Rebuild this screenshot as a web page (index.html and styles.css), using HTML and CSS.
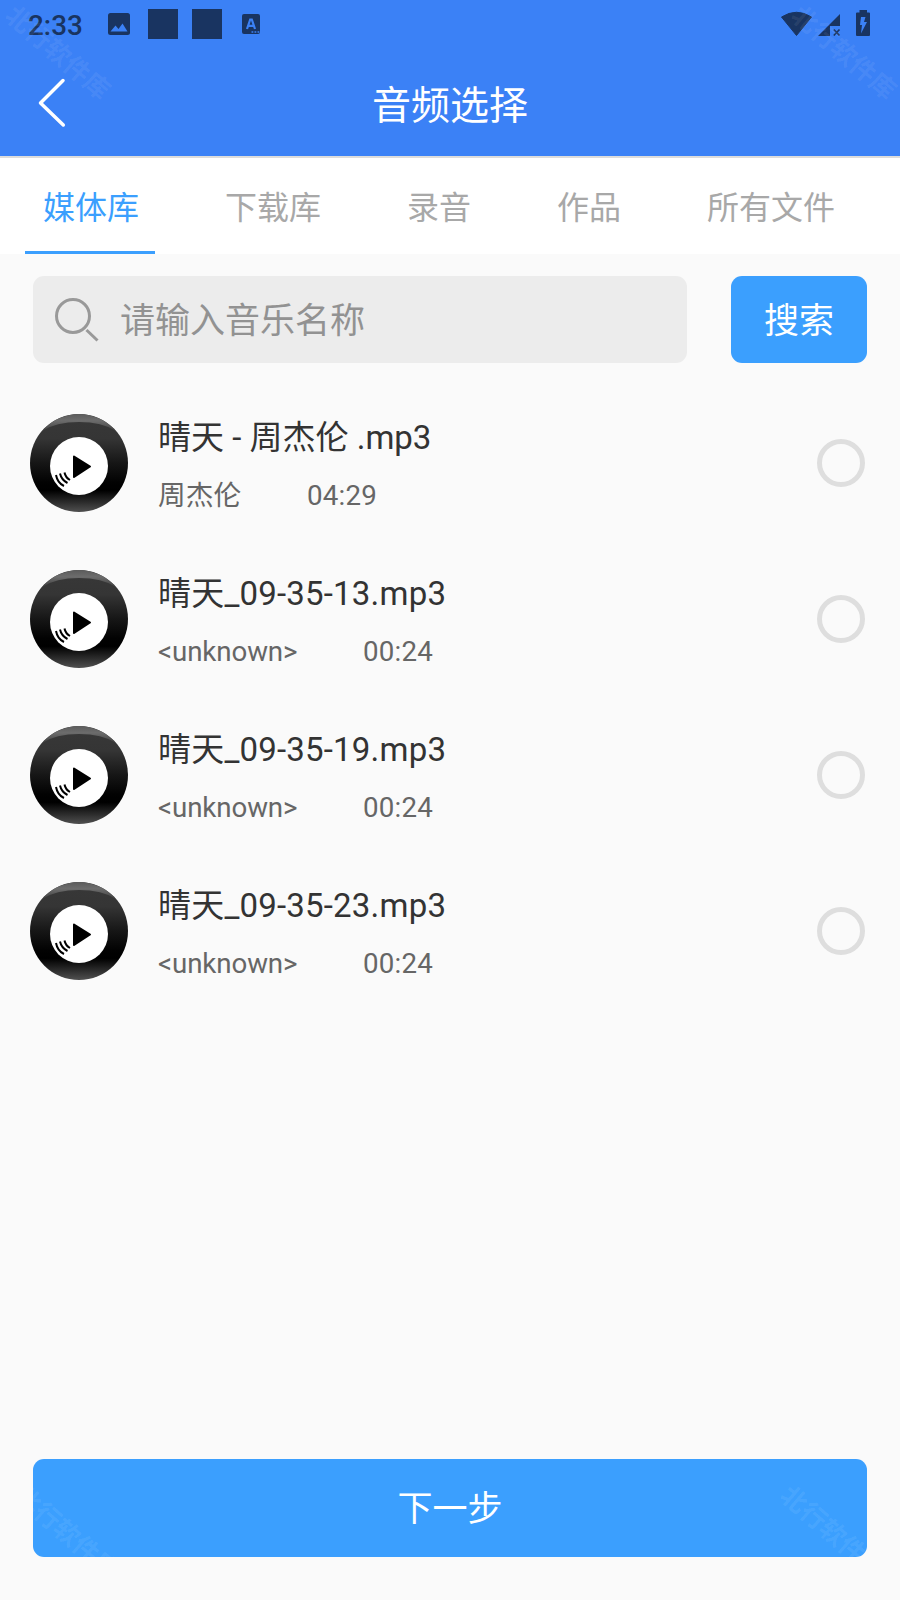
FILE: index.html
```html
<!DOCTYPE html>
<html lang="zh-CN">
<head>
<meta charset="utf-8">
<title>音频选择</title>
<link rel="stylesheet" href="styles.css">
</head>
<body>
<svg class="defs" width="0" height="0" aria-hidden="true">
  <defs>
    <linearGradient id="ring" x1="0" y1="0" x2="0" y2="1">
      <stop offset="0" stop-color="#383838"/>
      <stop offset=".25" stop-color="#353535"/>
      <stop offset=".5" stop-color="#161616"/>
      <stop offset=".7" stop-color="#020202"/>
      <stop offset=".78" stop-color="#000"/>
      <stop offset="1" stop-color="#505050"/>
    </linearGradient>
    <linearGradient id="gloss" x1="0" y1="0" x2="0" y2="1">
      <stop offset="0" stop-color="#5c5c5c"/>
      <stop offset=".4" stop-color="#6c6c6c"/>
      <stop offset="1" stop-color="#404040"/>
    </linearGradient>
    <symbol id="disc" viewBox="0 0 98 98">
      <circle cx="49" cy="49" r="49" fill="url(#ring)"/>
      <path d="M12 17A49 49 0 0 1 86 17Q72 8 49 8T12 17Z" fill="url(#gloss)"/>
      <circle cx="49" cy="52" r="29" fill="#fff"/>
      <path d="M44 42.500L60 52.500L44 63Z" stroke="#000" stroke-width="2" stroke-linejoin="round"/>
      <path d="M26 61Q27.500 69 34 72M30 59.500Q31.500 66 37.500 69M34.500 58.500Q35.500 63.500 40 66" fill="none" stroke="#000" stroke-width="2"/>
    </symbol>
  </defs>
</svg>
<div class="app">
  <header class="header">
    <div class="status">
      <span class="time">2:33</span>
      <svg class="ic-image" width="24" height="24" viewBox="0 0 24 24"><rect x="1" y="1" width="22" height="22" rx="2.500" fill="#193461"/><path d="M3.500 19.500L8.500 13.500L11.500 17L15.500 11.500L20.500 19.500Z" fill="#3b81f6"/></svg>
      <i class="block"></i>
      <i class="block second"></i>
      <svg class="ic-a" width="20" height="22" viewBox="0 0 20 22"><rect x="1" y="1" width="18" height="20" rx="2" fill="#193461"/><path d="M6 16L9.200 6.500H10.800L14 16M7.500 12.800H12.500" fill="none" stroke="#3b81f6" stroke-width="2.200"/><path d="M10.500 19H18.500" stroke="#3b81f6" stroke-width="1.600" stroke-dasharray="1.800 1.200"/></svg>
      <svg class="ic-net" width="90" height="30" viewBox="780 8 90 30"><path d="M781.500 17Q796.500 7.500 811.500 17L796.500 35.500Z" fill="#193461" stroke="#193461" stroke-width="1" stroke-linejoin="round"/><path d="M840 14V26H830V36H818Z" fill="#193461"/><path d="M833.800 29.500L839.500 35.500M839.500 29.500L833.800 35.500" stroke="#193461" stroke-width="1.700"/><path d="M857 12.500H859.500V10H867V12.500H869Q870 12.500 870 13.500V35Q870 36 869 36H857Q856 36 856 35V13.500Q856 12.500 857 12.500Z" fill="#193461"/><path d="M861 17H865.500L864 22H867L861 33.500L862 25H860Z" fill="#3b81f6"/></svg>
    </div>
    <div class="titlebar">
      <svg class="back" width="30" height="52" viewBox="38 77 30 52"><path d="M63 80.500L40.500 103L63.300 125" fill="none" stroke="#fff" stroke-width="3.500" stroke-linecap="round" stroke-linejoin="round"/></svg>
      <h1>音频选择</h1>
    </div>
  </header>
  <nav class="tabs">
    <span class="tab active">媒体库</span><span class="tab">下载库</span><span class="tab">录音</span><span class="tab">作品</span><span class="tab">所有文件</span>
  </nav>
  <div class="search">
    <div class="field">
      <svg width="44" height="44" viewBox="0 0 44 44"><circle cx="18" cy="18" r="16.500" fill="none" stroke="#999" stroke-width="3"/><path d="M31.500 32L42.500 42.500" stroke="#999" stroke-width="3"/></svg>
      <span>请输入音乐名称</span>
    </div>
    <button class="btn go">搜索</button>
  </div>
  <main class="list">
    <div class="row"><svg class="disc"><use href="#disc"/></svg><div class="info"><div class="name">晴天 - 周杰伦 .mp3</div><div class="meta"><span>周杰伦</span><span class="len">04:29</span></div></div><i class="radio"></i></div>
    <div class="row"><svg class="disc"><use href="#disc"/></svg><div class="info"><div class="name wide">晴天_09-35-13.mp3</div><div class="meta"><span class="artist">&lt;unknown&gt;</span><span class="len">00:24</span></div></div><i class="radio"></i></div>
    <div class="row"><svg class="disc"><use href="#disc"/></svg><div class="info"><div class="name wide">晴天_09-35-19.mp3</div><div class="meta"><span class="artist">&lt;unknown&gt;</span><span class="len">00:24</span></div></div><i class="radio"></i></div>
    <div class="row"><svg class="disc"><use href="#disc"/></svg><div class="info"><div class="name wide">晴天_09-35-23.mp3</div><div class="meta"><span class="artist">&lt;unknown&gt;</span><span class="len">00:24</span></div></div><i class="radio"></i></div>
  </main>
  <footer class="footer"><button class="btn next">下一步</button></footer>
  <span class="mark top left">北行软件库</span>
  <span class="mark top right">北行软件库</span>
  <span class="mark bottom left">北行软件库</span>
  <span class="mark bottom right">北行软件库</span>
</div>
</body>
</html>
```
FILE: styles.css
```css
* { box-sizing: border-box; }
body { margin: 0; background: #fafafa; font-family: Roboto, "Noto Sans CJK SC", sans-serif; }
.defs { display: block; }
.app { position: relative; display: flex; flex-direction: column; width: 900px; height: 1600px; overflow: hidden; background: #fafafa; }
.header { height: 158px; background: #3b81f6; border-bottom: 2px solid #dcdcdc; }
.status { display: flex; align-items: center; height: 50px; padding: 0 30px 2px 28px; }
.time { width: 79px; font-size: 27.800px; font-weight: 500; line-height: 32px; padding-top: 3px; color: #193461; }
.block { width: 30px; height: 30px; margin-left: 17px; background: #193461; }
.block.second { margin-left: 14px; }
.ic-a { margin-left: 19px; }
.ic-net { margin-left: auto; margin-top: -2px; }
.titlebar { display: grid; grid-template-columns: 38px 30px 1fr 68px; align-items: center; height: 106px; }
.back { grid-column: 2; }
.titlebar h1 { grid-column: 3; margin: 6px 0 0; text-align: center; font-size: 39px; line-height: 56px; font-weight: 400; color: #fff; }
.tabs { display: flex; height: 96px; background: #fff; }
.tab { padding: 22px 43px 0; font-size: 32px; line-height: 56px; color: #a8a8a8; white-space: nowrap; }
.tab.active { display: flex; flex-direction: column; justify-content: space-between; color: #3b9ffe; }
.tab.active::after { content: ""; width: 130px; height: 3px; margin: 0 -18px; background: #3b9ffe; }
.search { display: flex; justify-content: space-between; height: 109px; padding: 22px 33px 0; }
.field { display: flex; align-items: center; width: 654px; height: 87px; padding-left: 22px; gap: 21px; border-radius: 11px; background: #ececec; font-size: 35px; line-height: 50px; color: #929292; }
.field span { padding-top: 4px; }
.btn { border: 0; border-radius: 11px; padding: 4px 0 0; background: #3b9ffe; color: #fff; font: 400 35px/50px Roboto, "Noto Sans CJK SC", sans-serif; }
.go { width: 136px; height: 87px; }
.list { flex: 1; padding-top: 22px; }
.row { display: flex; align-items: center; height: 156px; padding: 0 35px 0 30px; }
.disc { width: 98px; height: 98px; }
.info { flex: 1; padding: 4px 0 0 30px; }
.name { font-size: 33px; line-height: 48px; color: #333; white-space: nowrap; }
.name.wide { letter-spacing: .200px; }
.meta { display: flex; gap: 66px; margin-top: 14px; font-size: 27.700px; line-height: 40px; color: #666; }
.artist { width: 139px; letter-spacing: -.100px; }
.len { letter-spacing: .200px; }
.radio { width: 48px; height: 48px; border: 5px solid #dedede; border-radius: 50%; }
.footer { padding: 0 33px 43px; }
.next { display: block; width: 834px; height: 98px; }
.mark { position: absolute; width: 128px; height: 26px; font-size: 25.500px; line-height: 26px; font-weight: 700; color: rgba(255, 255, 255, .08); white-space: nowrap; transform: rotate(40.700deg); }
.mark.top { top: 40px; }
.mark.bottom { top: 1520px; }
.mark.top.left { left: -6px; }
.mark.top.right { left: 780px; }
.mark.bottom.left { left: 3px; }
.mark.bottom.right { left: 769px; }
```
